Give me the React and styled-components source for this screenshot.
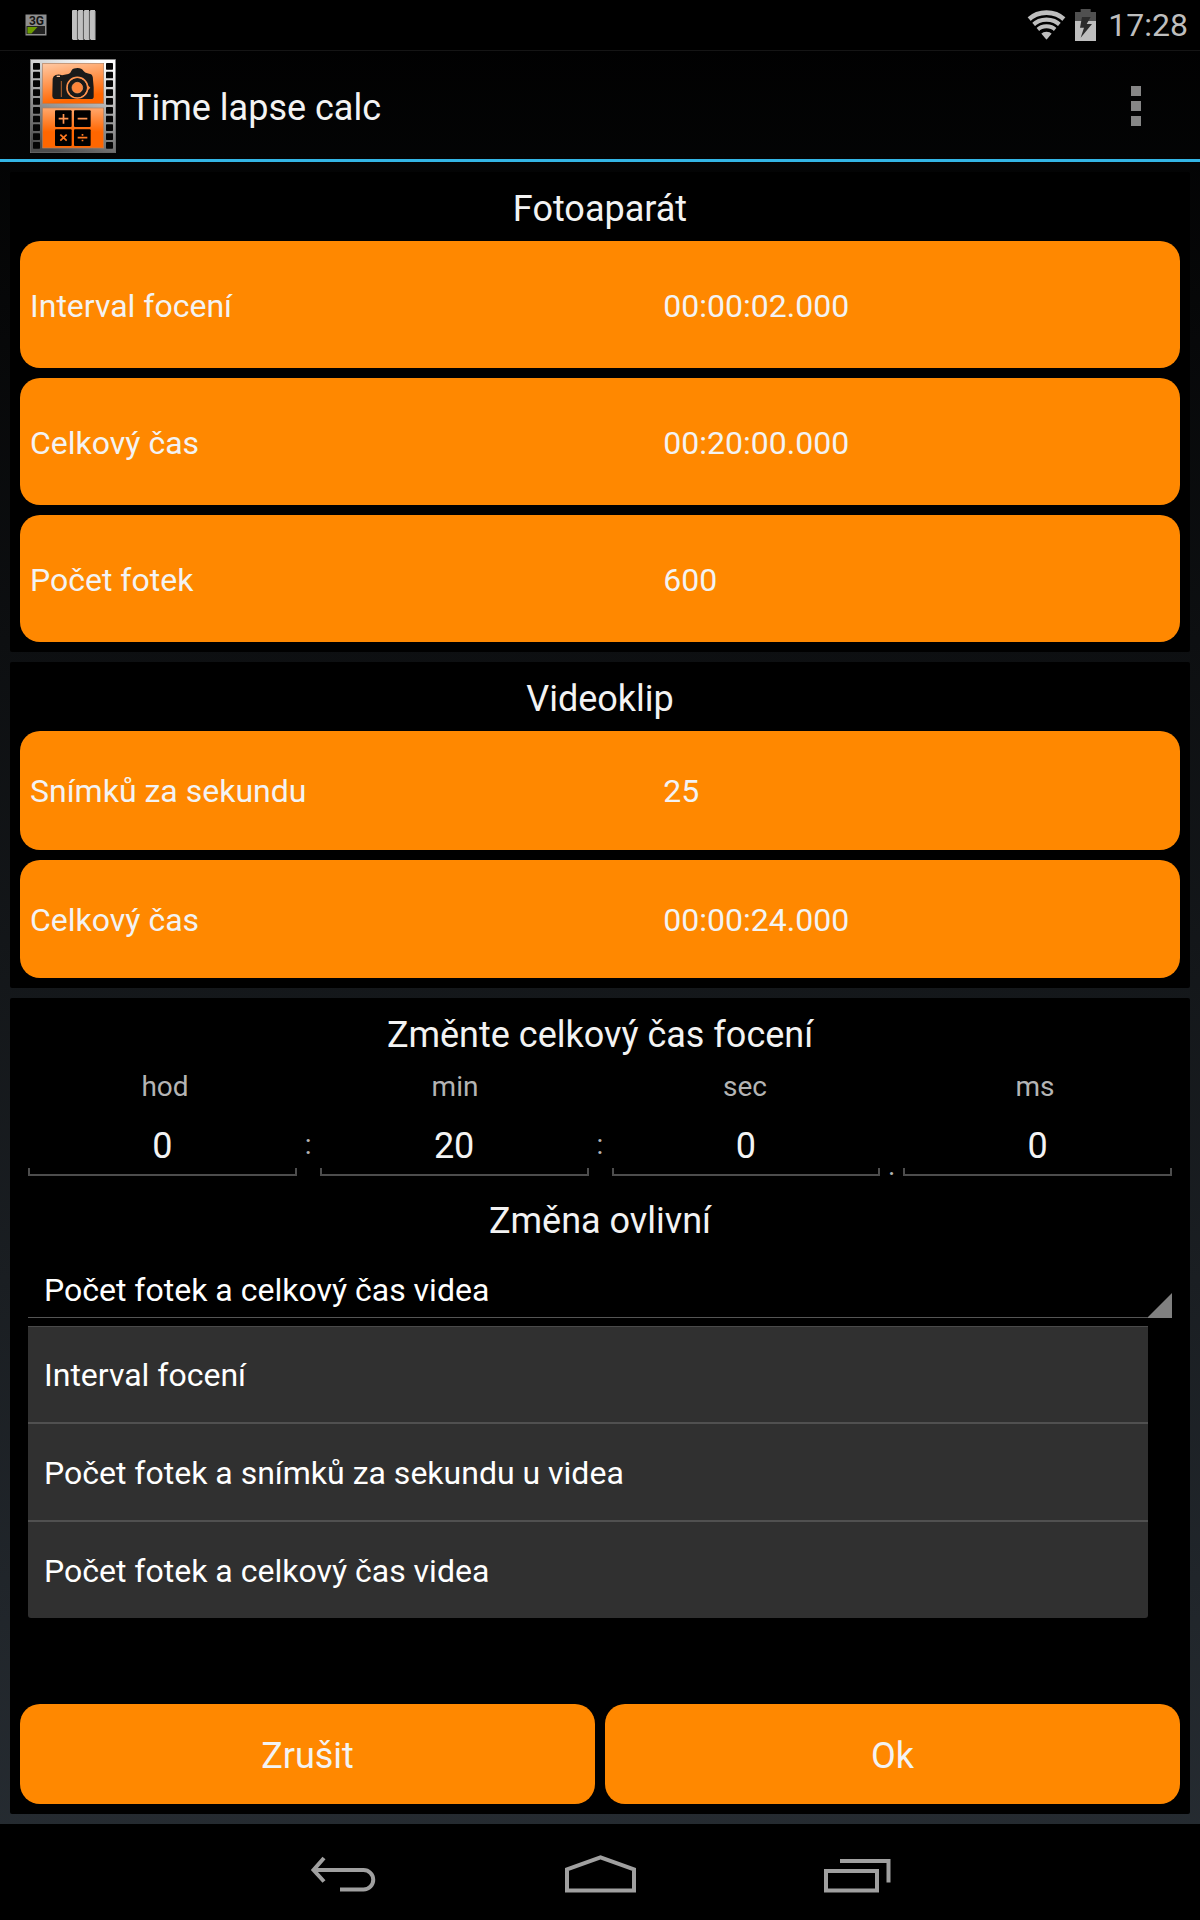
import React, { useState } from "react";
import styled, { createGlobalStyle } from "styled-components";

const GlobalStyle = createGlobalStyle`
  *, *::before, *::after { box-sizing: border-box; }
  body {
    margin: 0;
    background: #000;
    font-family: Roboto, "Noto Sans", sans-serif;
    color: #f3f3f3;
  }
  button, input, select { font-family: inherit; color: inherit; margin: 0; }
`;

const Screen = styled.div`
  display: flex;
  flex-direction: column;
  min-height: 100vh;
  background: linear-gradient(#000000, #272d33);
`;

const StatusBar = styled.header`
  display: flex;
  align-items: center;
  justify-content: space-between;
  height: 51px;
  padding: 0 12px 0 25px;
  background: #000;
  border-bottom: 1px solid #151515;
`;

const StatusGroup = styled.div`
  display: flex;
  align-items: center;
  gap: ${(p) => p.$gap}px;
`;

const Clock = styled.time`
  font-size: 32px;
  line-height: 40px;
  color: #bebebe;
  padding-left: 3px;
`;

const ActionBar = styled.div`
  display: flex;
  align-items: center;
  gap: 14px;
  height: 111px;
  padding: 2px 30px 0;
  border-bottom: 3px solid #33b5e5;
`;

const AppTitle = styled.h1`
  flex: 1;
  margin: 0;
  padding-top: 4px;
  font-size: 36px;
  line-height: 42px;
  font-weight: 400;
`;

const IconButton = styled.button`
  display: flex;
  align-items: center;
  justify-content: center;
  width: ${(p) => p.$width}px;
  height: 96px;
  padding: 0;
  border: 0;
  background: none;
`;

const Content = styled.main`
  flex: 1;
  display: flex;
  flex-direction: column;
  gap: 10px;
  padding: 10px;
`;

const Panel = styled.section`
  flex: ${(p) => (p.$grow ? 1 : "none")};
  display: flex;
  flex-direction: column;
  padding: 0 10px 10px;
  border-radius: 2px;
  background: #000;
`;

const Heading = styled.h2`
  margin: ${(p) => (p.$spaced ? 8 : 0)}px 0 0;
  padding: 16px 0 11px;
  font-size: 36px;
  line-height: 42px;
  font-weight: 400;
  text-align: center;
`;

const Rows = styled.div`
  display: flex;
  flex-direction: column;
  gap: 10px;
  min-height: ${(p) => (p.$compact ? 247 : 401)}px;
`;

const Row = styled.button`
  flex: 1;
  display: grid;
  grid-template-columns: 5fr 4fr;
  align-items: center;
  padding: 2px 10px 0;
  border: 0;
  border-radius: 20px;
  background: #ff8800;
  font-size: 32px;
  line-height: 38px;
  text-align: left;
`;

const UnitLabels = styled.div`
  display: grid;
  grid-template-columns: repeat(4, 1fr);
`;

const UnitLabel = styled.label`
  font-size: 28px;
  line-height: 40px;
  color: #b4b4b4;
  text-align: center;
`;

const TimeFields = styled.div`
  display: flex;
  height: 69px;
  padding: 0 8px;
`;

const TimeInput = styled.input`
  flex: 1;
  min-width: 0;
  padding: 10px 0 0;
  border: 0;
  border-radius: 0;
  border-bottom: 2px solid #4d4d4d;
  background:
    linear-gradient(#4d4d4d, #4d4d4d) left bottom / 2px 6px no-repeat,
    linear-gradient(#4d4d4d, #4d4d4d) right bottom / 2px 6px no-repeat;
  font-size: 36px;
  text-align: center;
  outline: none;
`;

const Separator = styled.span`
  align-self: ${(p) => (p.$low ? "flex-end" : "flex-start")};
  width: 23px;
  font-size: 28px;
  line-height: ${(p) => (p.$low ? 20 : 76)}px;
  color: #b4b4b4;
  text-align: center;
`;

const Spinner = styled.div`
  position: relative;
  margin: 0 8px;
`;

const SpinnerSelect = styled.select`
  display: block;
  appearance: none;
  width: 100%;
  height: 65px;
  padding: 10px 40px 0 16px;
  border: 0;
  border-radius: 0;
  border-bottom: 1px solid #555;
  background: none;
  font-size: 32px;
  color: #fff;
  outline: none;
`;

const SpinnerCorner = styled.svg`
  position: absolute;
  right: 0;
  bottom: 0;
  pointer-events: none;
`;

const Menu = styled.ul`
  position: absolute;
  top: calc(100% + 8px);
  left: 0;
  right: 24px;
  margin: 0;
  padding: 0;
  list-style: none;
  border-radius: 0 0 3px 3px;
  background: #303030;
  box-shadow: inset 0 1px #4a4a4a;
`;

const MenuItem = styled.li`
  padding: 30px 16px 28px;
  font-size: 32px;
  line-height: 38px;
  color: #fff;

  & + & { border-top: 2px solid #505050; }
`;

const Actions = styled.div`
  display: flex;
  gap: 10px;
  margin-top: auto;
`;

const ActionButton = styled.button`
  flex: 1;
  height: 100px;
  padding: 4px 0 0;
  border: 0;
  border-radius: 20px;
  background: #ff8800;
  font-size: 36px;
`;

const NavBar = styled.nav`
  display: flex;
  justify-content: center;
  gap: 57px;
  height: 96px;
  padding-top: 2px;
  background: #000;
`;

const SignalIcon = () => (
  <svg width="22" height="22" viewBox="0 0 22 22" aria-hidden="true">
    <rect x="0.5" y="0.5" width="21" height="21" fill="#8f8f8f" />
    <rect x="1.5" y="12" width="18.5" height="8" fill="#222" />
    <path d="M2.5 13h10l-6 6.500h-4z" fill="#6b9b00" />
    <text x="11.500" y="10.500" fontFamily="Roboto, sans-serif" fontSize="12" fontWeight="700" textAnchor="middle" fill="#151515">3G</text>
  </svg>
);

const BarsIcon = () => (
  <svg width="24" height="30" viewBox="0 0 24 30" aria-hidden="true">
    {[0, 6, 12, 18].map((x) => (
      <g key={x}>
        <path d={`M${x} 1q0-1 1-1h4v29l1 1h-5l-1-1z`} fill="#c0c0c0" />
        <path d={`M${x + 5.4} 1v28`} stroke="#6a6a6a" strokeWidth="1" />
      </g>
    ))}
  </svg>
);

const WifiIcon = () => (
  <svg width="39" height="30" viewBox="0 0 117 90" aria-hidden="true">
    <defs>
      <clipPath id="wedge"><path d="M58.500 89L-8 10V-20H125V10Z" /></clipPath>
    </defs>
    <g clipPath="url(#wedge)" fill="none" stroke="#bebebe">
      <circle cx="58.500" cy="89" r="81" strokeWidth="14" />
      <circle cx="58.500" cy="89" r="60" strokeWidth="13" />
      <circle cx="58.500" cy="89" r="40" strokeWidth="12" />
      <circle cx="58.500" cy="89" r="12" strokeWidth="24" />
    </g>
  </svg>
);

const BatteryIcon = () => (
  <svg width="21" height="32" viewBox="0 0 63 96" aria-hidden="true">
    <path d="M17 0h30v9h16v27H0V9h17z" fill="#505050" />
    <path d="M0 36h63v60H0z" fill="#bebebe" />
    <path d="M21 24H47L35 45H51L17 86L27 56H15Z" fill="#2c2c2c" />
  </svg>
);

const holeRows = [189, 215, 241, 268, 294, 321, 347, 373, 400, 426];

const AppIcon = () => (
  <svg width="86" height="94" viewBox="90 177 258 282" aria-hidden="true">
    <defs>
      <linearGradient id="film" x1="0.7" y1="0" x2="0.35" y2="1">
        <stop offset="0" stopColor="#fdfdfd" />
        <stop offset="0.5" stopColor="#a2a2a2" />
        <stop offset="1" stopColor="#4d4d4d" />
      </linearGradient>
      <linearGradient id="top" x1="0.2" y1="0" x2="0.5" y2="1">
        <stop offset="0" stopColor="#ffc49c" />
        <stop offset="0.45" stopColor="#ff9650" />
        <stop offset="0.9" stopColor="#ff6600" />
      </linearGradient>
      <linearGradient id="low" x1="0" y1="0" x2="0" y2="1">
        <stop offset="0" stopColor="#ffa76c" />
        <stop offset="0.6" stopColor="#ff6600" />
      </linearGradient>
    </defs>
    <rect x="91" y="178" width="256" height="280" fill="url(#film)" stroke="#777" strokeWidth="2" />
    {holeRows.map((y) => (
      <g key={y} fill="#050505">
        <rect x="99" y={y} width="21" height="20" rx="2" />
        <rect x="318" y={y} width="21" height="20" rx="2" />
      </g>
    ))}
    <rect x="128" y="190" width="183" height="121" fill="url(#top)" stroke="#b08060" strokeWidth="2" />
    <rect x="128" y="324" width="183" height="120" fill="url(#low)" stroke="#b08060" strokeWidth="2" />
    <path d="M158 236Q159 228 167 225Q176 221 186 226L205 222Q212 219 216 209Q220 204 233 204Q245 204 250 212Q255 219 262 220L273 223Q279 226 279 240L281 262V290Q281 297 273 297H165Q158 297 157 288Z" fill="#1a1a1a" />
    <path d="M184 243v48" stroke="#b5622c" strokeWidth="3" />
    <path d="M170 229h10" stroke="#ffc49c" strokeWidth="4" />
    <circle cx="232" cy="263" r="31" fill="none" stroke="#ff9450" strokeWidth="5" />
    <path d="M262 254l9 9-9 9z" fill="#ff8a40" />
    <circle cx="232" cy="263" r="28" fill="#1a1a1a" />
    <circle cx="232" cy="263" r="16" fill="#ff8438" stroke="#ffa060" strokeWidth="2" />
    <g fill="#000">
      <rect x="165" y="331" width="50" height="50" rx="3" />
      <rect x="222" y="331" width="50" height="50" rx="3" />
      <rect x="165" y="388" width="50" height="50" rx="3" />
      <rect x="222" y="388" width="50" height="50" rx="3" />
    </g>
    <g fill="none" strokeWidth="5">
      <path d="M176 356h29M190.500 342v29M233 356h29" stroke="#ff9450" />
      <path d="M181 404l19 18M200 404l-19 18M233 413h29" stroke="#ff7a20" />
      <path d="M247.500 402v5M247.500 419v5" stroke="#ff7a20" />
    </g>
  </svg>
);

const OverflowIcon = () => (
  <svg width="10" height="40" viewBox="0 0 10 40" fill="#868686" aria-hidden="true">
    <path d="M0 0h10v10H0zM0 15h10v10H0zM0 30h10v10H0z" />
  </svg>
);

const BackIcon = () => (
  <svg width="66" height="38" viewBox="0 -3 66 38" fill="none" stroke="#a0a0a0" strokeWidth="4" aria-hidden="true">
    <path d="M14 0L3.500 12L14 23.500M4 12H53.500a9.750 9.750 0 0 1 0 19.500H30" />
  </svg>
);

const HomeIcon = () => (
  <svg width="71" height="38" viewBox="0 0 71 38" fill="none" stroke="#a0a0a0" strokeWidth="4" aria-hidden="true">
    <path d="M2 35.500V14.300L35.500 2.300L69 14.300V35.500Z" />
  </svg>
);

const RecentsIcon = () => (
  <svg width="67" height="38" viewBox="0 -4 67 38" fill="none" stroke="#a0a0a0" strokeWidth="4" aria-hidden="true">
    <path d="M2 12H53V31.500H2ZM16 2H64.500V23.500" />
  </svg>
);

const camera = [
  ["Interval focení", "00:00:02.000"],
  ["Celkový čas", "00:20:00.000"],
  ["Počet fotek", "600"],
];

const video = [
  ["Snímků za sekundu", "25"],
  ["Celkový čas", "00:00:24.000"],
];

const units = [
  { id: "hod", value: "0", after: ":" },
  { id: "min", value: "20", after: ":" },
  { id: "sec", value: "0", after: "." },
  { id: "ms", value: "0" },
];

const choices = [
  "Interval focení",
  "Počet fotek a snímků za sekundu u videa",
  "Počet fotek a celkový čas videa",
];

function ValuePanel({ title, rows, compact }) {
  return (
    <Panel>
      <Heading>{title}</Heading>
      <Rows $compact={compact}>
        {rows.map(([label, value]) => (
          <Row key={label} type="button">
            <span>{label}</span>
            <span>{value}</span>
          </Row>
        ))}
      </Rows>
    </Panel>
  );
}

export default function App() {
  const [choice, setChoice] = useState(choices[2]);

  return (
    <Screen>
      <GlobalStyle />
      <StatusBar>
        <StatusGroup $gap={25}>
          <SignalIcon />
          <BarsIcon />
        </StatusGroup>
        <StatusGroup $gap={9}>
          <WifiIcon />
          <BatteryIcon />
          <Clock>17:28</Clock>
        </StatusGroup>
      </StatusBar>
      <ActionBar>
        <AppIcon />
        <AppTitle>Time lapse calc</AppTitle>
        <IconButton type="button" $width={68} aria-label="Menu">
          <OverflowIcon />
        </IconButton>
      </ActionBar>
      <Content>
        <ValuePanel title="Fotoaparát" rows={camera} />
        <ValuePanel title="Videoklip" rows={video} compact />
        <Panel $grow>
          <Heading>Změnte celkový čas focení</Heading>
          <UnitLabels>
            {units.map((u) => (
              <UnitLabel key={u.id} htmlFor={u.id}>{u.id}</UnitLabel>
            ))}
          </UnitLabels>
          <TimeFields>
            {units.map((u) => (
              <React.Fragment key={u.id}>
                <TimeInput id={u.id} type="text" inputMode="numeric" size="1" defaultValue={u.value} />
                {u.after && <Separator $low={u.after === "."}>{u.after}</Separator>}
              </React.Fragment>
            ))}
          </TimeFields>
          <Heading $spaced as="label" htmlFor="affects">Změna ovlivní</Heading>
          <Spinner>
            <SpinnerSelect id="affects" value={choice} onChange={(e) => setChoice(e.target.value)}>
              {choices.map((c) => <option key={c}>{c}</option>)}
            </SpinnerSelect>
            <SpinnerCorner width="24" height="25" viewBox="0 0 24 25" aria-hidden="true">
              <path d="M24 0V25H0V24Z" fill="#808080" />
            </SpinnerCorner>
            <Menu role="listbox" aria-label="Změna ovlivní">
              {choices.map((c) => (
                <MenuItem key={c} role="option" aria-selected={c === choice} onClick={() => setChoice(c)}>
                  {c}
                </MenuItem>
              ))}
            </Menu>
          </Spinner>
          <Actions>
            <ActionButton type="button">Zrušit</ActionButton>
            <ActionButton type="button">Ok</ActionButton>
          </Actions>
        </Panel>
      </Content>
      <NavBar>
        <IconButton type="button" $width={200} aria-label="Zpět"><BackIcon /></IconButton>
        <IconButton type="button" $width={200} aria-label="Domů"><HomeIcon /></IconButton>
        <IconButton type="button" $width={200} aria-label="Poslední aplikace"><RecentsIcon /></IconButton>
      </NavBar>
    </Screen>
  );
}
